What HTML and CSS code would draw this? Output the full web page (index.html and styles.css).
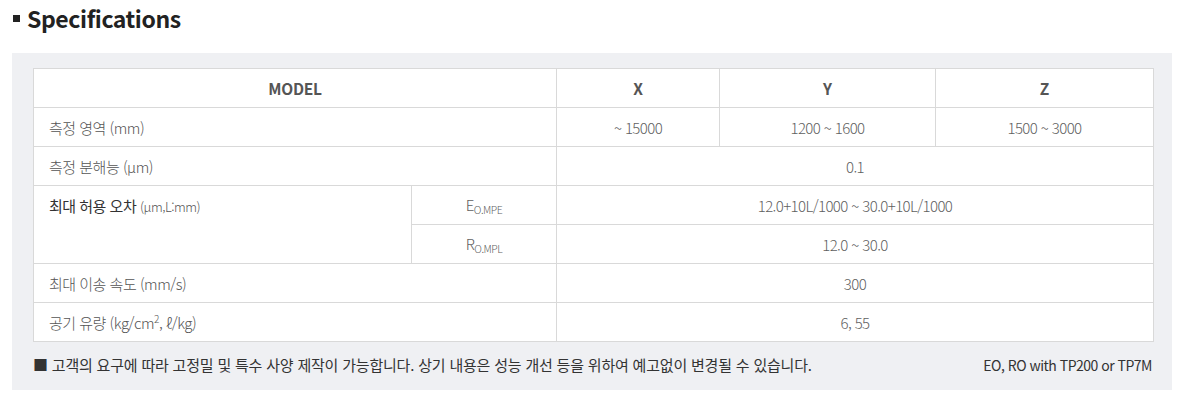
FILE: index.html
```html
<!DOCTYPE html>
<html lang="ko">
<head>
<meta charset="utf-8">
<link rel="stylesheet" href="styles.css">
</head>
<body>
<h2 class="title"><span class="bullet"></span>Specifications</h2>
<div class="panel">
  <table class="spec">
    <colgroup>
      <col class="c1"><col class="c2"><col class="c3"><col class="c4"><col class="c5">
    </colgroup>
    <thead>
      <tr><th colspan="2">MODEL</th><th>X</th><th>Y</th><th>Z</th></tr>
    </thead>
    <tbody>
      <tr><td colspan="2" class="lbl">측정 영역 (mm)</td><td>~ 15000</td><td>1200 ~ 1600</td><td>1500 ~ 3000</td></tr>
      <tr><td colspan="2" class="lbl">측정 분해능 (µm)</td><td colspan="3">0.1</td></tr>
      <tr><td rowspan="2" class="lbl top"><span class="dark">최대 허용 오차</span> <span class="small">(µm,L:mm)</span></td><td class="sub">E<sub>O.MPE</sub></td><td colspan="3">12.0+10L/1000 ~ 30.0+10L/1000</td></tr>
      <tr><td class="sub">R<sub>O.MPL</sub></td><td colspan="3">12.0 ~ 30.0</td></tr>
      <tr><td colspan="2" class="lbl">최대 이송 속도 (mm/s)</td><td colspan="3">300</td></tr>
      <tr><td colspan="2" class="lbl">공기 유량 (kg/cm<sup>2</sup>, ℓ/kg)</td><td colspan="3">6, 55</td></tr>
    </tbody>
  </table>
  <div class="notes">
    <p class="note">■ 고객의 요구에 따라 고정밀 및 특수 사양 제작이 가능합니다. 상기 내용은 성능 개선 등을 위하여 예고없이 변경될 수 있습니다.</p>
    <p class="probe">EO, RO with TP200 or TP7M</p>
  </div>
</div>
</body>
</html>
```

FILE: styles.css
```css
html, body {
  margin: 0;
  padding: 0;
  background: #fff;
}
body {
  font-family: "Noto Sans CJK KR", "Noto Sans", sans-serif;
  color: #555;
  width: 1183px;
}
.title {
  margin: 0;
  padding: 3px 0 0 13px;
  height: 53px;
  box-sizing: border-box;
  font-size: 23px;
  line-height: 30px;
  font-weight: 700;
  color: #222;
  display: flex;
  align-items: flex-start;
  letter-spacing: -0.4px;
}
.bullet {
  display: inline-block;
  width: 7px;
  height: 7px;
  background: #222;
  margin: 12px 7px 0 0;
}
.panel {
  margin: 0 11px 0 12px;
  background: #eff0f3;
  padding: 15px 20px 0 21px;
  height: 337px;
  box-sizing: border-box;
}
.spec {
  width: 1120px;
  border-collapse: collapse;
  background: #fff;
  table-layout: fixed;
}
.c1 { width: 378px; }
.c2 { width: 145px; }
.c3 { width: 163px; }
.c4 { width: 216px; }
.c5 { width: 218px; }
.spec th, .spec td {
  border: 1px solid #d9d9d9;
  height: 39px;
  padding: 0 10px;
  box-sizing: border-box;
  text-align: center;
  font-size: 15px;
  letter-spacing: -0.6px;
  color: #5f5f5f;
  font-weight: 300;
  vertical-align: middle;
}
.spec th {
  font-weight: 700;
  color: #555;
  font-size: 15.5px;
  letter-spacing: -0.2px;
}
.spec td.lbl {
  text-align: left;
  padding-left: 15px;
  letter-spacing: -0.5px;
  color: #555;
}
.spec td.top {
  vertical-align: top;
  padding-top: 9px;
}
.dark {
  color: #333;
  font-weight: 400;
}
.small {
  font-size: 13px;
}
.sub sub {
  font-size: 10.5px;
  vertical-align: -3px;
  letter-spacing: -0.5px;
}
sup {
  font-size: 10px;
  vertical-align: 6px;
  line-height: 0;
}
.notes {
  display: flex;
  justify-content: space-between;
  align-items: baseline;
  padding-top: 12px;
}
.note {
  margin: 0;
  font-size: 15px;
  color: #333;
  letter-spacing: -0.2px;
}
.probe {
  margin: 0;
  font-size: 14px;
  color: #333;
  letter-spacing: -0.5px;
}
```
